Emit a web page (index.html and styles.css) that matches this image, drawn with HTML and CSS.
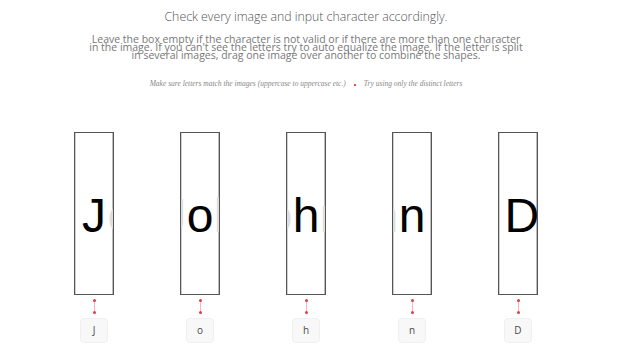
FILE: index.html
```html
<!DOCTYPE html>
<html>
<head>
<meta charset="utf-8">
<link rel="stylesheet" href="styles.css">
</head>
<body>
<div class="page">
  <h1 class="title">Check every image and input character accordingly.</h1>
  <p class="intro">Leave the box empty if the character is not valid or if there are more than one character in the image. If you can't see the letters try to auto equalize the image. If the letter is split in several images, drag one image over another to combine the shapes.</p>
  <p class="hints"><span>Make sure letters match the images (uppercase to uppercase etc.)</span><span class="dot"></span><span>Try using only the distinct letters</span></p>
  <div class="row">
    <div class="col">
      <div class="crop"><div class="strip"><span class="ghost"></span><span class="main">J</span><span class="ghost">o</span></div></div>
      <div class="link"></div>
      <div class="field">J</div>
    </div>
    <div class="col">
      <div class="crop"><div class="strip"><span class="ghost">J</span><span class="main">o</span><span class="ghost">h</span></div></div>
      <div class="link"></div>
      <div class="field">o</div>
    </div>
    <div class="col">
      <div class="crop"><div class="strip"><span class="ghost">o</span><span class="main">h</span><span class="ghost">n</span></div></div>
      <div class="link"></div>
      <div class="field">h</div>
    </div>
    <div class="col">
      <div class="crop"><div class="strip"><span class="ghost">h</span><span class="main">n</span><span class="ghost"></span></div></div>
      <div class="link"></div>
      <div class="field">n</div>
    </div>
    <div class="col">
      <div class="crop"><div class="strip"><span class="ghost"></span><span class="main">D</span><span class="ghost"></span></div></div>
      <div class="link"></div>
      <div class="field">D</div>
    </div>
  </div>
</div>
</body>
</html>
```

FILE: styles.css
```css
html, body {
  margin: 0;
  padding: 0;
  background: #ffffff;
}
.page {
  width: 612px;
  display: flex;
  flex-direction: column;
  align-items: center;
  font-family: "Open Sans", "Liberation Sans", sans-serif;
}
.title {
  margin: 8px 0 0 0;
  font-size: 12.3px;
  font-weight: 300;
  line-height: 18px;
  color: #555555;
}
.intro {
  width: 436px;
  margin: 9px 0 0 0;
  font-size: 10.5px;
  line-height: 8px;
  color: #777777;
  text-align: center;
}
.hints {
  margin: 20px 0 0 0;
  display: flex;
  align-items: center;
  gap: 6px;
  font-family: "Liberation Serif", "DejaVu Serif", serif;
  font-style: italic;
  font-size: 7.5px;
  line-height: 10px;
  color: #888888;
}
.dot {
  width: 2px;
  height: 2px;
  background: #e74c3c;
  margin: 2px 2px 0 2px;
}
.row {
  margin-top: 43px;
  display: flex;
  justify-content: center;
}
.col {
  width: 106px;
  display: flex;
  flex-direction: column;
  align-items: center;
}
.crop {
  width: 38px;
  height: 157px;
  padding-top: 4px;
  border: 1px solid #555555;
  box-shadow: inset -1px 0 0 #bdbdbd, inset 1px 0 0 #d0d0d0;
  overflow: hidden;
  display: flex;
  justify-content: center;
  align-items: center;
  background: #ffffff;
}
.strip {
  display: flex;
  align-items: center;
  font-family: "Liberation Sans", Arial, sans-serif;
  font-size: 48px;
  line-height: 48px;
  flex-shrink: 0;
}
.main {
  color: #000000;
  width: 27px;
  text-align: center;
}
.ghost {
  color: #dedede;
  width: 30px;
  text-align: center;
}
.strip .ghost:first-child {
  text-align: right;
}
.strip .ghost:last-child {
  text-align: left;
}
.link {
  position: relative;
  width: 1px;
  height: 13px;
  margin-top: 5px;
  background: #f5b7bd;
}
.link::before,
.link::after {
  content: "";
  position: absolute;
  left: -1px;
  width: 3px;
  height: 3px;
  border-radius: 50%;
  background: #e53945;
}
.link::before { top: -1px; }
.link::after { bottom: -1px; }
.field {
  margin-top: 5px;
  width: 26px;
  height: 23px;
  border: 1px solid #f0f0f0;
  border-radius: 4px;
  background: #f8f8f8;
  font-size: 10px;
  line-height: 23px;
  text-align: center;
  color: #4a4a4a;
}
```
